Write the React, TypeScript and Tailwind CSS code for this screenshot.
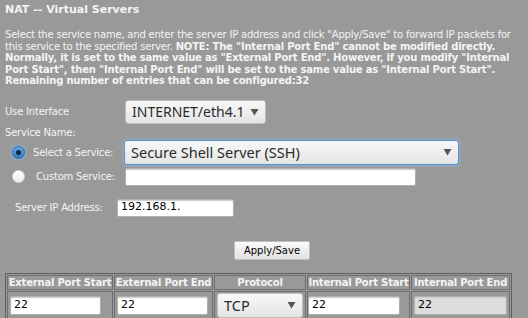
const font = { fontFamily: '"DejaVu Sans", sans-serif' };

function Triangle() {
  return (
    <svg width="9" height="8" viewBox="0 0 9 8" className="shrink-0">
      <path d="M0.5 1 L8.5 1 L4.5 7.5 Z" fill="#555" />
    </svg>
  );
}

function FakeSelect({
  value,
  className,
  focus,
}: {
  value: string;
  className: string;
  focus?: boolean;
}) {
  return (
    <div
      className={`flex items-center justify-between rounded-[3px] bg-gradient-to-b from-[#f8f8f8] to-[#e4e4e4] px-[6px] text-[#2a2a2a] ${
        focus ? "border border-[#5a8fc0] shadow-[0_0_2px_1px_#8ab4da]" : "border border-[#bdbdbd]"
      } ${className}`}
      style={{ fontFamily: '"Noto Sans", "Open Sans", sans-serif' }}
    >
      <span className="leading-none tracking-normal">{value}</span>
      <Triangle />
    </div>
  );
}

function TextBox({ value, className, disabled }: { value?: string; className: string; disabled?: boolean }) {
  return (
    <div
      className={`flex items-center rounded-[2px] border border-[#b0b0b0] px-[3px] text-[11px] tracking-normal text-black shadow-[inset_0_1px_1px_#ccc] ${
        disabled ? "bg-[#dcdcdc]" : "bg-white"
      } ${className}`}
      style={font}
    >
      {value}
    </div>
  );
}

function Radio({ checked }: { checked?: boolean }) {
  return checked ? (
    <span className="flex h-[13px] w-[13px] items-center justify-center rounded-full border border-[#2f6ea8] bg-gradient-to-b from-[#6aa9e0] to-[#2f77c0] shadow-[0_0_2px_1px_#7fb0dd]">
      <span className="block h-[5px] w-[5px] rounded-full bg-[#0b2a4a]" />
    </span>
  ) : (
    <span className="block h-[13px] w-[13px] rounded-full border border-[#d6d6d6] bg-gradient-to-b from-white to-[#ececec]" />
  );
}

const headers = ["External Port Start", "External Port End", "Protocol", "Internal Port Start", "Internal Port End"];
const colW = ["w-[106px]", "w-[99px]", "w-[92px]", "w-[103px]", "w-[98px]"];

export default function App() {
  return (
    <div className="h-[318px] w-[528px] overflow-hidden bg-[#999999] tracking-[-0.2px] text-[#f4f4f4]" style={font}>
      <div className="px-[5px] pt-[3px]">
        <h1 className="text-[11px] font-bold leading-[13px] tracking-normal">NAT -- Virtual Servers</h1>
        <div className="mt-[13px] whitespace-nowrap text-[10px] leading-[11.5px]">
          <div>
            Select the service name, and enter the server IP address and click "Apply/Save" to forward IP packets for
          </div>
          <div>
            this service to the specified server. <b>NOTE: The "Internal Port End" cannot be modified directly.</b>
          </div>
          <div className="font-bold">
            Normally, it is set to the same value as "External Port End". However, if you modify "Internal
          </div>
          <div className="font-bold">
            Port Start", then "Internal Port End" will be set to the same value as "Internal Port Start".
          </div>
          <div className="font-bold">Remaining number of entries that can be configured:32</div>
        </div>
      </div>

      <div className="mt-[13px] flex items-center px-[5px] text-[10px]">
        <span className="w-[120px]">Use Interface</span>
        <FakeSelect value="INTERNET/eth4.1" className="h-[24px] w-[141px] text-[14px]" />
      </div>
      <div className="mt-[2px] px-[5px] text-[10px] leading-[14px]">Service Name:</div>

      <div className="mt-0 flex items-center text-[10px]">
        <span className="ml-[12px] w-[21px]">
          <Radio checked />
        </span>
        <span className="w-[91px]">Select a Service:</span>
        <FakeSelect focus value="Secure Shell Server (SSH)" className="h-[25px] w-[335px] text-[14.5px]" />
      </div>
      <div className="mt-[3px] flex items-center text-[10px]">
        <span className="ml-[12px] w-[24px]">
          <Radio />
        </span>
        <span className="w-[89px]">Custom Service:</span>
        <TextBox className="h-[18px] w-[291px]" />
      </div>

      <div className="mt-[13px] flex items-center pl-[15px] text-[10px]">
        <span className="w-[102px]">Server IP Address:</span>
        <TextBox value="192.168.1." className="h-[18px] w-[117px]" />
      </div>

      <div className="mt-[24px] flex justify-center pl-[16px]">
        <button
          className="h-[19px] rounded-[2px] border border-[#c0c0c0] bg-gradient-to-b from-[#fafafa] to-[#e2e2e2] px-[9px] text-[10px] tracking-normal text-black"
          style={font}
        >
          Apply/Save
        </button>
      </div>

      <table className="ml-[5px] mt-[13px] table-fixed border-separate border-spacing-[1px] border border-[#5f5f5f]">
        <thead>
          <tr>
            {headers.map((h, i) => (
              <th
                key={h}
                className={`${colW[i]} overflow-hidden whitespace-nowrap border border-[#6e6e6e] px-0 text-center text-[10px] font-bold leading-[13px] text-[#f4f4f4]`}
              >
                {h}
              </th>
            ))}
          </tr>
        </thead>
        <tbody>
          <tr>
            <td className="border border-[#6e6e6e] px-[2px] py-[4px]">
              <TextBox value="22" className="h-[19px] w-[91px]" />
            </td>
            <td className="border border-[#6e6e6e] px-[2px] py-[4px]">
              <TextBox value="22" className="h-[19px] w-[91px]" />
            </td>
            <td className="border border-[#6e6e6e] px-[2px] py-[1px]">
              <FakeSelect value="TCP" className="h-[25px] w-[86px] text-[14.5px]" />
            </td>
            <td className="border border-[#6e6e6e] px-0 py-[4px]">
              <TextBox value="22" className="h-[19px] w-[92px]" />
            </td>
            <td className="border border-[#6e6e6e] px-[2px] py-[4px]">
              <TextBox disabled value="22" className="h-[19px] w-[93px]" />
            </td>
          </tr>
        </tbody>
      </table>
    </div>
  );
}
